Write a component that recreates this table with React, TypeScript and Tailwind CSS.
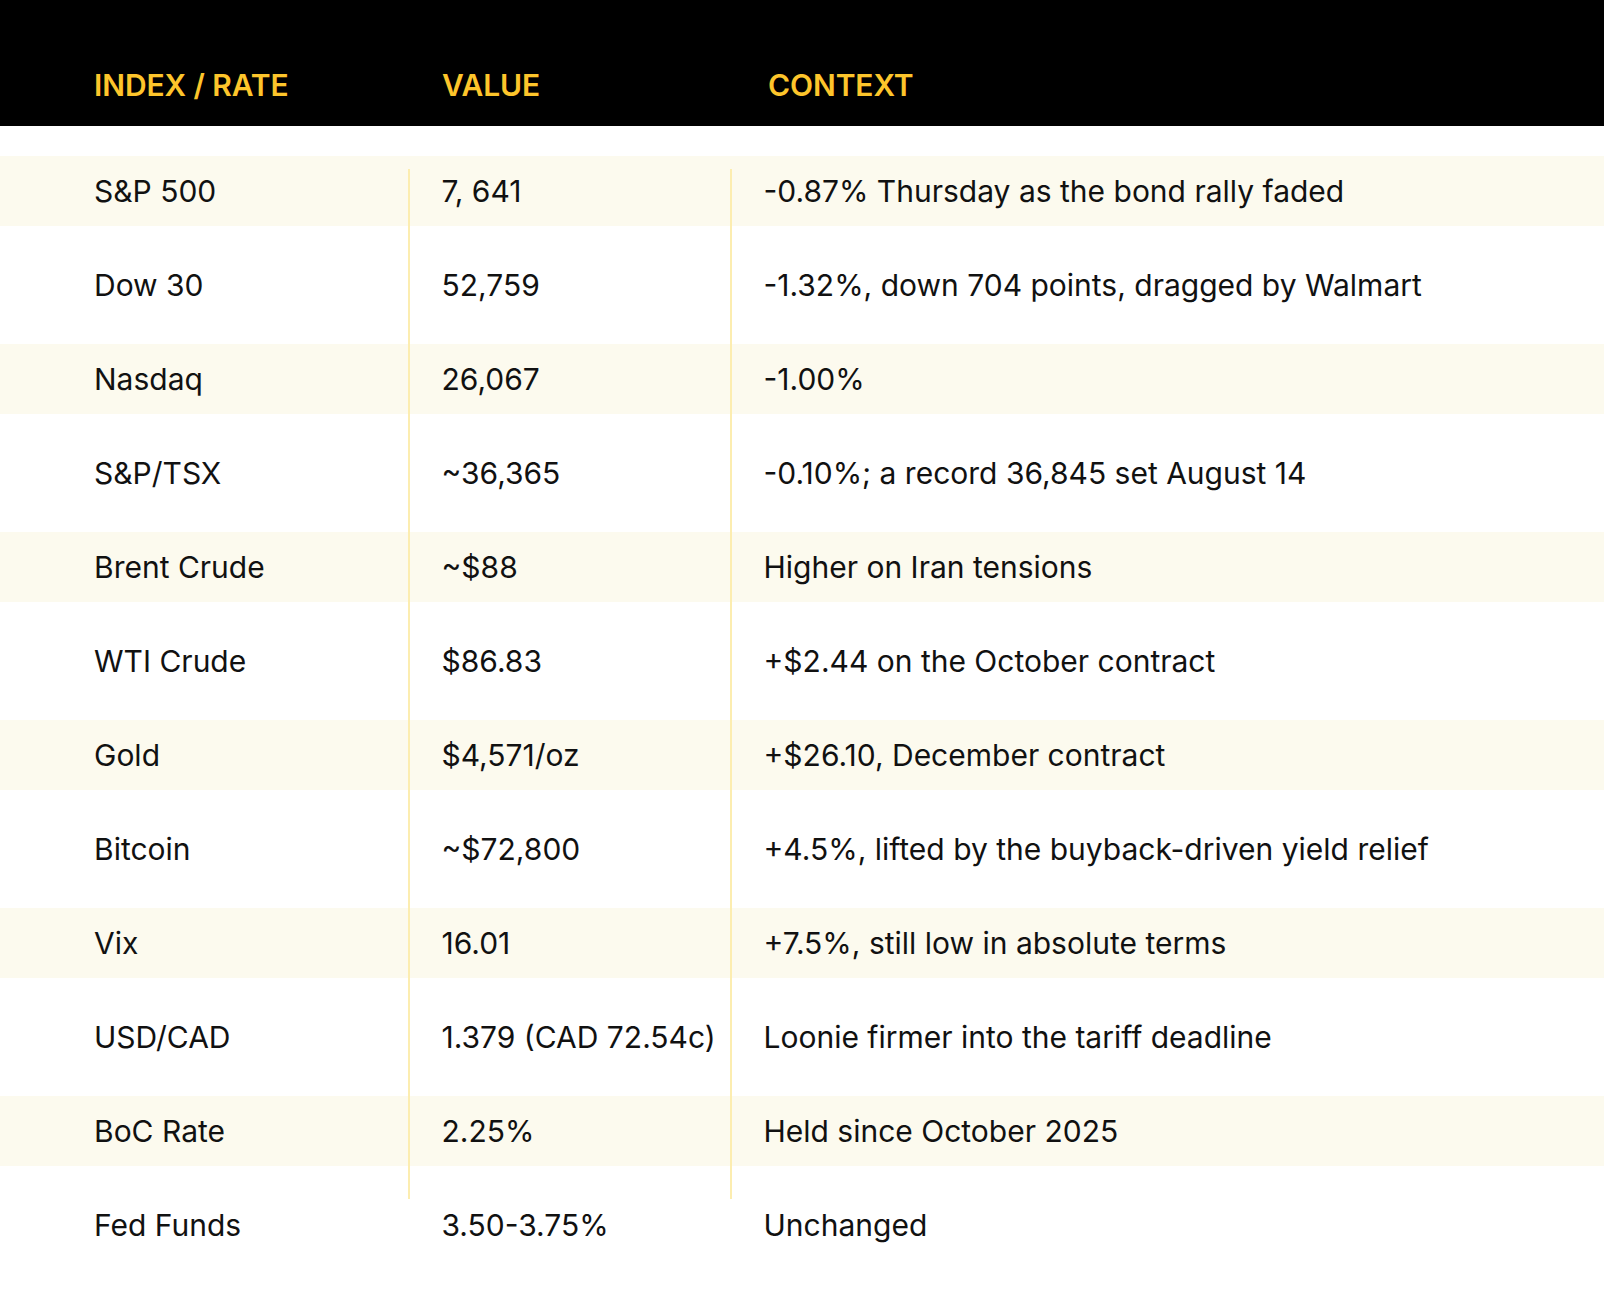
const rows: [string, string, string][] = [
  ["S&P 500", "7, 641", "-0.87% Thursday as the bond rally faded"],
  ["Dow 30", "52,759", "-1.32%, down 704 points, dragged by Walmart"],
  ["Nasdaq", "26,067", "-1.00%"],
  ["S&P/TSX", "~36,365", "-0.10%; a record 36,845 set August 14"],
  ["Brent Crude", "~$88", "Higher on Iran tensions"],
  ["WTI Crude", "$86.83", "+$2.44 on the October contract"],
  ["Gold", "$4,571/oz", "+$26.10, December contract"],
  ["Bitcoin", "~$72,800", "+4.5%, lifted by the buyback-driven yield relief"],
  ["Vix", "16.01", "+7.5%, still low in absolute terms"],
  ["USD/CAD", "1.379 (CAD 72.54c)", "Loonie firmer into the tariff deadline"],
  ["BoC Rate", "2.25%", "Held since October 2025"],
  ["Fed Funds", "3.50-3.75%", "Unchanged"],
];

// Divider that runs through the rows; trimmed on the first and last row
const Divider = ({ index }: { index: number }) => (
  <div
    className={`w-[1.5px] self-stretch bg-[#fcedb0] ${
      index === 0 ? "mt-[25px]" : ""
    } ${index === rows.length - 1 ? "mb-[73px]" : ""}`}
  />
);

export default function App() {
  return (
    <div className="min-h-[1296px] w-[1604px] bg-white font-['Inter',sans-serif] text-[#111111]">
      {/* Header */}
      <div className="flex h-[126px] items-start bg-black pt-[67px] text-[30px] font-semibold leading-[36px] tracking-[-0.1px] text-[#fdc52b]">
        <div className="w-[408px] pl-[94px]">INDEX / RATE</div>
        <div className="w-[322px] pl-[34px]">VALUE</div>
        <div className="flex-1 pl-[38px]">CONTEXT</div>
      </div>

      {/* Body */}
      <div className="mt-[18px] flex flex-col pb-[24px]">
        {rows.map(([name, value, context], i) => (
          <div
            key={name}
            className={`flex h-[94px] py-[12px] bg-clip-content text-[30px] leading-[36px] ${
              i % 2 === 0 ? "bg-[#fcfaee]" : "bg-white"
            }`}
          >
            <div className="-my-[12px] flex w-[408px] items-center pl-[94px]">
              {name}
            </div>
            <div className="-my-[12px] flex w-[322px]">
              <Divider index={i} />
              <div className="flex items-center pl-[32px] whitespace-nowrap">
                {value}
              </div>
            </div>
            <div className="-my-[12px] flex flex-1">
              <Divider index={i} />
              <div className="flex items-center pl-[32px] whitespace-nowrap">
                {context}
              </div>
            </div>
          </div>
        ))}
      </div>
    </div>
  );
}
